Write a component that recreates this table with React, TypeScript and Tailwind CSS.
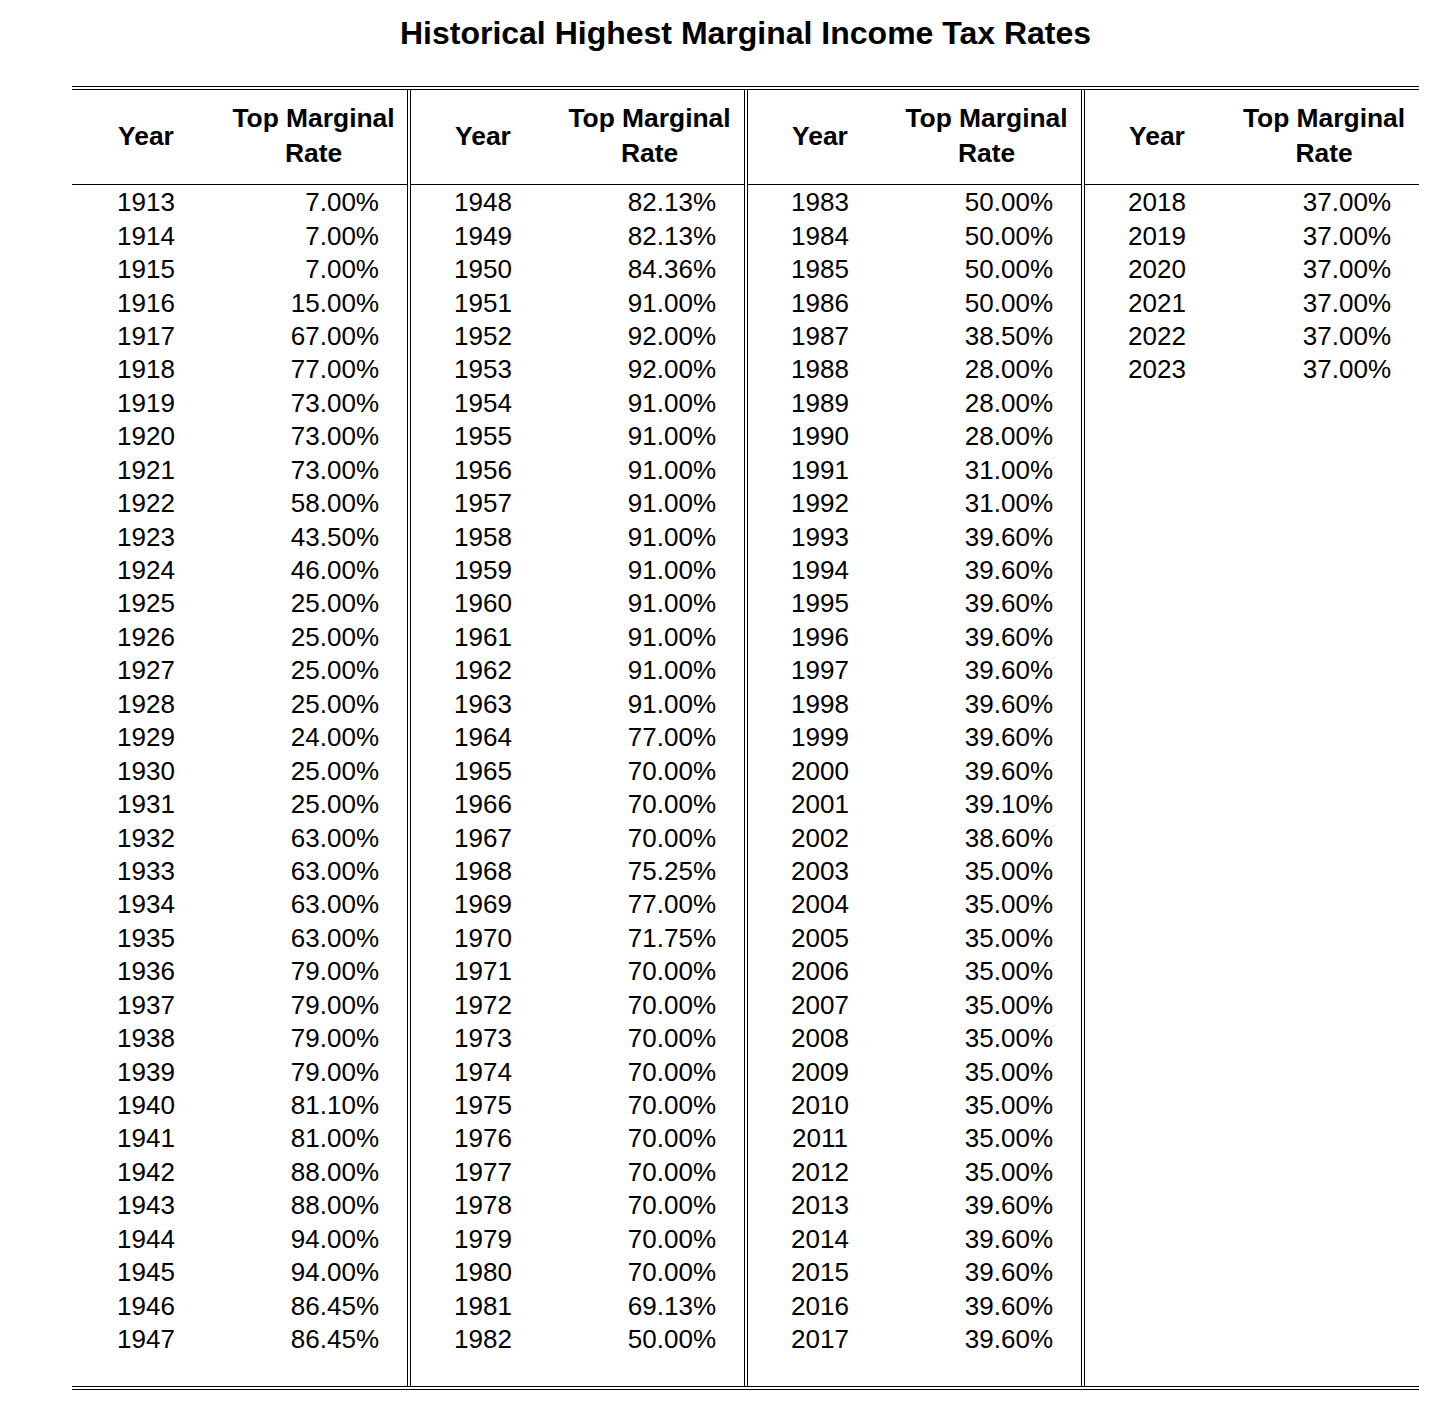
import React from "react";

const g1: [string, string][] = [
  ["1913", "7.00%"], ["1914", "7.00%"], ["1915", "7.00%"], ["1916", "15.00%"], ["1917", "67.00%"],
  ["1918", "77.00%"], ["1919", "73.00%"], ["1920", "73.00%"], ["1921", "73.00%"], ["1922", "58.00%"],
  ["1923", "43.50%"], ["1924", "46.00%"], ["1925", "25.00%"], ["1926", "25.00%"], ["1927", "25.00%"],
  ["1928", "25.00%"], ["1929", "24.00%"], ["1930", "25.00%"], ["1931", "25.00%"], ["1932", "63.00%"],
  ["1933", "63.00%"], ["1934", "63.00%"], ["1935", "63.00%"], ["1936", "79.00%"], ["1937", "79.00%"],
  ["1938", "79.00%"], ["1939", "79.00%"], ["1940", "81.10%"], ["1941", "81.00%"], ["1942", "88.00%"],
  ["1943", "88.00%"], ["1944", "94.00%"], ["1945", "94.00%"], ["1946", "86.45%"], ["1947", "86.45%"],
];
const g2: [string, string][] = [
  ["1948", "82.13%"], ["1949", "82.13%"], ["1950", "84.36%"], ["1951", "91.00%"], ["1952", "92.00%"],
  ["1953", "92.00%"], ["1954", "91.00%"], ["1955", "91.00%"], ["1956", "91.00%"], ["1957", "91.00%"],
  ["1958", "91.00%"], ["1959", "91.00%"], ["1960", "91.00%"], ["1961", "91.00%"], ["1962", "91.00%"],
  ["1963", "91.00%"], ["1964", "77.00%"], ["1965", "70.00%"], ["1966", "70.00%"], ["1967", "70.00%"],
  ["1968", "75.25%"], ["1969", "77.00%"], ["1970", "71.75%"], ["1971", "70.00%"], ["1972", "70.00%"],
  ["1973", "70.00%"], ["1974", "70.00%"], ["1975", "70.00%"], ["1976", "70.00%"], ["1977", "70.00%"],
  ["1978", "70.00%"], ["1979", "70.00%"], ["1980", "70.00%"], ["1981", "69.13%"], ["1982", "50.00%"],
];
const g3: [string, string][] = [
  ["1983", "50.00%"], ["1984", "50.00%"], ["1985", "50.00%"], ["1986", "50.00%"], ["1987", "38.50%"],
  ["1988", "28.00%"], ["1989", "28.00%"], ["1990", "28.00%"], ["1991", "31.00%"], ["1992", "31.00%"],
  ["1993", "39.60%"], ["1994", "39.60%"], ["1995", "39.60%"], ["1996", "39.60%"], ["1997", "39.60%"],
  ["1998", "39.60%"], ["1999", "39.60%"], ["2000", "39.60%"], ["2001", "39.10%"], ["2002", "38.60%"],
  ["2003", "35.00%"], ["2004", "35.00%"], ["2005", "35.00%"], ["2006", "35.00%"], ["2007", "35.00%"],
  ["2008", "35.00%"], ["2009", "35.00%"], ["2010", "35.00%"], ["2011", "35.00%"], ["2012", "35.00%"],
  ["2013", "39.60%"], ["2014", "39.60%"], ["2015", "39.60%"], ["2016", "39.60%"], ["2017", "39.60%"],
];
const g4: [string, string][] = [
  ["2018", "37.00%"], ["2019", "37.00%"], ["2020", "37.00%"], ["2021", "37.00%"], ["2022", "37.00%"],
  ["2023", "37.00%"],
];

function Group({ rows, left, right, yearW }: { rows: [string, string][]; left: boolean; right: boolean; yearW: string }) {
  return (
    <div
      className={
        "flex flex-col " +
        (left ? "border-l border-black " : "") +
        (right ? "border-r border-black " : "")
      }
      style={{ width: left ? 335 : 336 }}
    >
      <div className="flex h-[95px] items-center border-b border-black pb-[2px] font-bold text-[26.4px] leading-[35px]">
        <div className={yearW + " text-center"}>Year</div>
        <div className="flex-1 text-center">
          Top Marginal
          <br />
          Rate
        </div>
      </div>
      <div className="flex flex-1 flex-col pt-[1px] pb-[30px]">
        {rows.map(([y, r]) => (
          <div key={y} className="flex h-[33.44px] items-center text-[26px] leading-[33px]">
            <div className={yearW + " text-center"}>{y}</div>
            <div className="flex-1 pr-[28px] text-right">{r}</div>
          </div>
        ))}
      </div>
    </div>
  );
}

export default function App() {
  return (
    <div
      className="min-h-[1426px] w-[1456px] bg-white text-black"
      style={{ fontFamily: '"Liberation Sans", Arial, sans-serif' }}
    >
      <div className="ml-[72px] w-[1347px]">
        <div className="flex h-[66px] items-center justify-center text-[32px] font-bold leading-[37px]">
          Historical Highest Marginal Income Tax Rates
        </div>
        <div className="mt-[20px] flex gap-[2px] border-y-[4px] border-double border-black">
          <Group rows={g1} left={false} right={true} yearW="w-[148px]" />
          <Group rows={g2} left={true} right={true} yearW="w-[144px]" />
          <Group rows={g3} left={true} right={true} yearW="w-[144px]" />
          <Group rows={g4} left={true} right={false} yearW="w-[144px]" />
        </div>
      </div>
    </div>
  );
}
